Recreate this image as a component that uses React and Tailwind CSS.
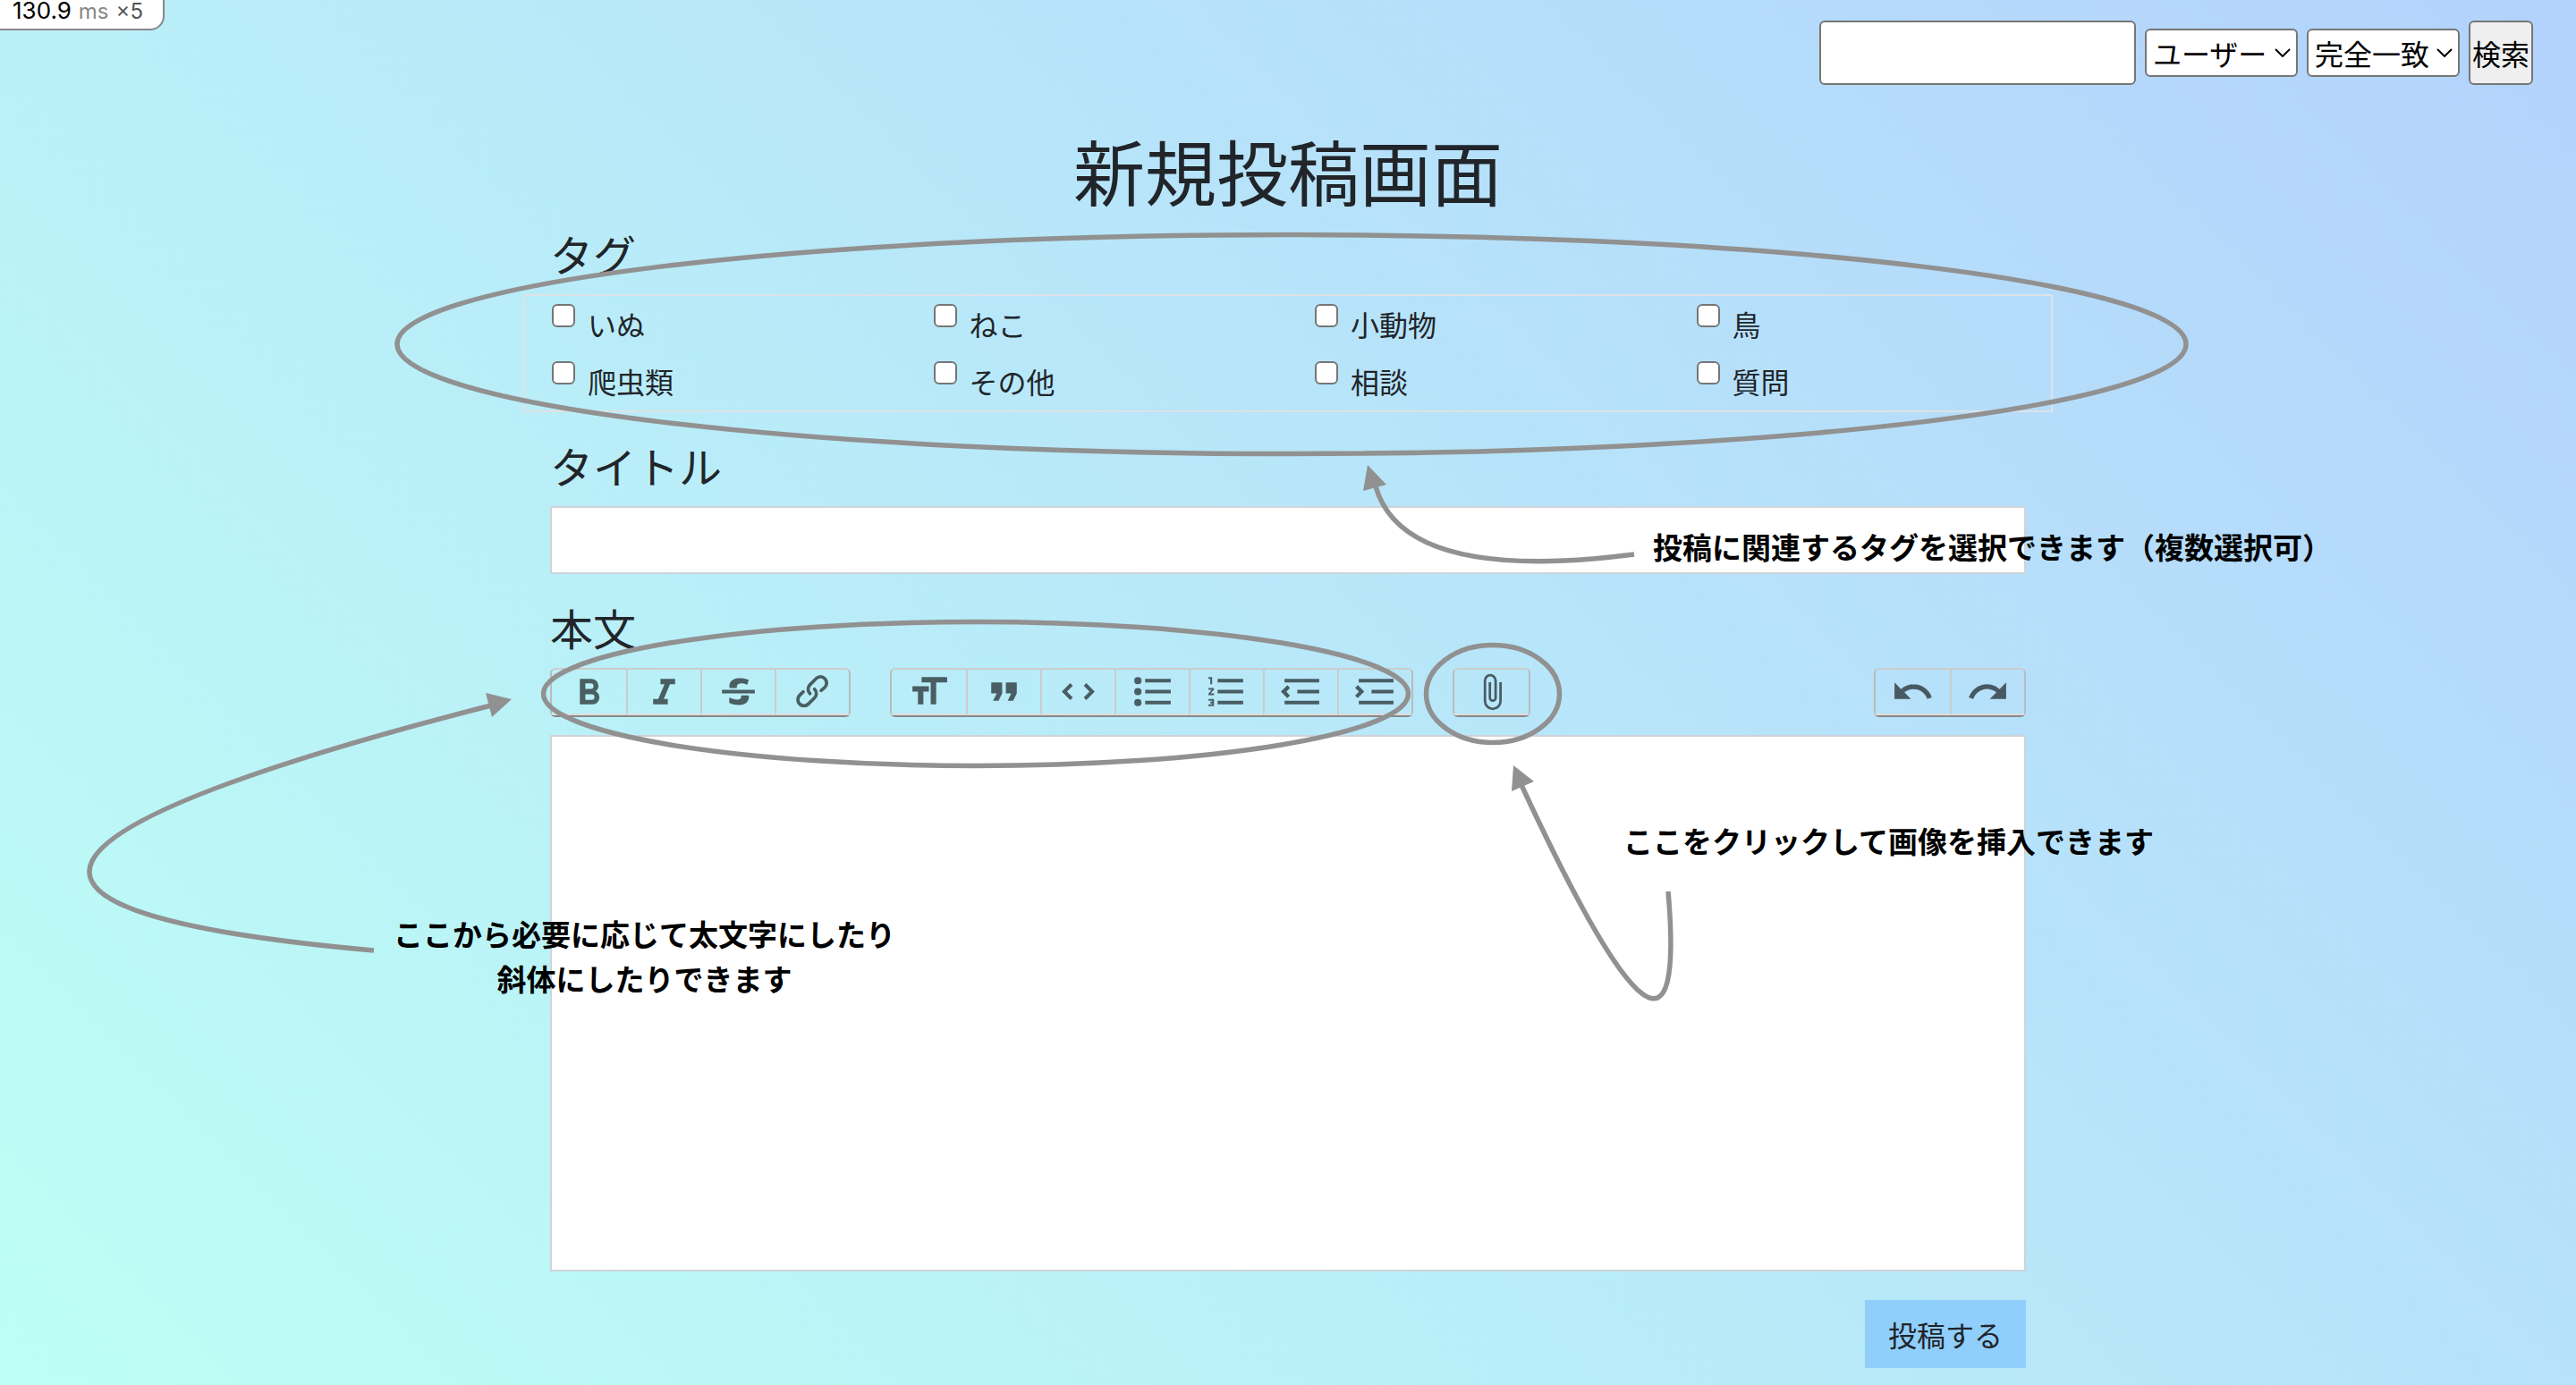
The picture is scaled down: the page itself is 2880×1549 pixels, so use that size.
import React from "react";

const PATHS = {
  bold: "M15.6 11.8c1-.7 1.6-1.8 1.6-2.8a4 4 0 0 0-4-4H7v14h7c2.1 0 3.7-1.7 3.7-3.8 0-1.5-.8-2.8-2.1-3.4zM10 7.5h3a1.5 1.5 0 1 1 0 3h-3v-3zm3.5 9H10v-3h3.5a1.5 1.5 0 1 1 0 3z",
  italic: "M10 5v3h2.2l-3.4 8H6v3h8v-3h-2.2l3.4-8H18V5h-8z",
  strike:
    "M3 11v2h18v-2H3zM7.2 10C6.5 6.7 9 4.7 12.6 4.7c1.9 0 3.6.3 5.1.9l-.9 2.7c-.9-.5-1.8-.8-3-.8-1.9 0-2.9.7-2.6 2.5H7.2zM17.7 14.1c.5 3-1.6 5.2-5.1 5.2-2 0-3.9-.3-5.6-1.2v-2.9c1.5.8 3 1.2 4.4 1.2 1.7 0 2.4-.9 2.1-2.3h4.2z",
  link: "M9.88 13.7a4.3 4.3 0 0 1 0-6.07l3.37-3.37a4.26 4.26 0 0 1 6.07 0 4.3 4.3 0 0 1 0 6.06l-1.96 1.72a.91.91 0 1 1-1.3-1.3l1.97-1.71a2.46 2.46 0 0 0-3.48-3.48l-3.38 3.37a2.46 2.46 0 0 0 0 3.48.91.91 0 1 1-1.3 1.3zM4.25 19.46a4.3 4.3 0 0 1 0-6.07l1.93-1.9a.91.91 0 1 1 1.3 1.3l-1.93 1.9a2.46 2.46 0 0 0 3.48 3.48l3.37-3.38c.96-.96.96-2.52 0-3.48a.91.91 0 1 1 1.3-1.3 4.3 4.3 0 0 1 0 6.07l-3.38 3.38a4.26 4.26 0 0 1-6.07 0z",
  heading: "M12 9v3H9v7H6v-7H3V9h9zM8 4h14v3h-6v12h-3V7H8V4z",
  quote: "M6 17h3l2-4V7H5v6h3zm8 0h3l2-4V7h-6v6h3z",
  code: "M18.2 12L15 15.2l1.4 1.4L21 12l-4.6-4.6L15 8.8l3.2 3.2zM5.8 12L9 8.8 7.6 7.4 3 12l4.6 4.6L9 15.2 5.8 12z",
  bullets:
    "M4 4a2 2 0 1 0 0 4 2 2 0 0 0 0-4zm0 6a2 2 0 1 0 0 4 2 2 0 0 0 0-4zm0 6a2 2 0 1 0 0 4 2 2 0 0 0 0-4zm4 3h14v-2H8v2zm0-6h14v-2H8v2zm0-8v2h14V5H8z",
  numbers:
    "M2 17h2v.5H3v1h1v.5H2v1h3v-4H2v1zm1-9h1V4H2v1h1v3zm-1 3h1.8L2 13.1v.9h3v-1H3.2L5 10.9V10H2v1zm5-6v2h14V5H7zm0 14h14v-2H7v2zm0-6h14v-2H7v2z",
  outdent:
    "M3 19h19v-2H3v2zm7-6h12v-2H10v2zm-8.3-.3l2.8 2.9L6 14.2 4 12l2-2-1.4-1.5L1 12l.7.7zM3 5v2h19V5H3z",
  indent:
    "M3 19h19v-2H3v2zm7-6h12v-2H10v2zm-6.9-1L1 14.2l1.4 1.4L6 12l-.7-.7-2.8-2.8L1 9.9 3.1 12zM3 5v2h19V5H3z",
  attach:
    "M16.5 6v11.5a4 4 0 1 1-8 0V5a2.5 2.5 0 0 1 5 0v10.5a1 1 0 1 1-2 0V6H10v9.5a2.5 2.5 0 0 0 5 0V5a4 4 0 1 0-8 0v12.5a5.5 5.5 0 0 0 11 0V6h-1.5z",
  undo: "M12.5 8c-2.6 0-5 1-6.9 2.6L2 7v9h9l-3.6-3.6A8 8 0 0 1 20 16l2.4-.8a10.5 10.5 0 0 0-10-7.2z",
  redo: "M18.4 10.6a10.5 10.5 0 0 0-16.9 4.6L4 16a8 8 0 0 1 12.7-3.6L13 16h9V7l-3.6 3.6z",
};

const TAGS = ["いぬ", "ねこ", "小動物", "鳥", "爬虫類", "その他", "相談", "質問"];

function ToolGroup({ tools }) {
  return (
    <div className="flex rounded-md border-2 border-[#bbb] border-t-[#ccc] border-b-[#888]">
      {tools.map(([id, label], i) => (
        <button
          key={id}
          type="button"
          aria-label={label}
          className={
            "flex h-[51px] w-[83px] items-center justify-center border-b-2 border-b-[#ddd] " +
            (i > 0 ? "border-l-2 border-l-[#ccc]" : "")
          }
        >
          <svg
            viewBox="0 0 24 24"
            className={id === "attach" ? "size-11 opacity-60" : "size-[49px] opacity-60"}
            aria-hidden="true"
          >
            <path d={PATHS[id]} />
          </svg>
        </button>
      ))}
    </div>
  );
}

function Select({ label, options }) {
  return (
    <div className="relative">
      <select
        aria-label={label}
        className="block h-[54px] w-[171px] appearance-none rounded-md border-2 border-[#767676] bg-white pl-[7px] text-[32px] leading-[50px] text-black"
      >
        {options.map((o) => (
          <option key={o}>{o}</option>
        ))}
      </select>
      <svg
        viewBox="0 0 18 10"
        className="pointer-events-none absolute top-[22px] right-2 h-[10px] w-[18px]"
        fill="none"
        stroke="#000"
        strokeWidth="2"
        aria-hidden="true"
      >
        <path d="M1 1l8 8 8-8" />
      </svg>
    </div>
  );
}

function Annotations() {
  return (
    <div className="pointer-events-none absolute inset-0 overflow-hidden text-[33px] leading-[50px] font-bold whitespace-nowrap text-black">
      <svg
        viewBox="0 0 2880 1549"
        className="absolute top-0 left-0 w-full"
        fill="none"
        stroke="#919191"
        strokeWidth="5.5"
        aria-hidden="true"
      >
        <ellipse cx="1444" cy="385" rx="1000" ry="122.5" />
        <ellipse cx="1091" cy="776" rx="483.5" ry="80.5" />
        <ellipse cx="1669" cy="776" rx="74.5" ry="54.5" />
        <path d="M1827 620Q1569 653 1538 544" />
        <path d="M418 1063Q-278 1001 549 789" />
        <path d="M1865 997Q1890 1286 1701 878" />
        <g fill="#919191" stroke="none">
          <path d="M1529 520L1524 549 1550 542z" />
          <path d="M572 782L543 775 550 802z" />
          <path d="M1692 856L1690 885 1715 874z" />
        </g>
      </svg>
      <p className="absolute top-[586px] left-[1848px]">
        投稿に関連するタグを選択できます（複数選択可）
      </p>
      <p className="absolute top-[915px] left-[1815px]">ここをクリックして画像を挿入できます</p>
      <p className="absolute top-[1019px] left-[440px] text-center">
        ここから必要に応じて太文字にしたり
        <br />
        斜体にしたりできます
      </p>
    </div>
  );
}

export default function App() {
  return (
    <div className="relative min-h-screen bg-linear-45 from-[#bdfff5] to-[#b3d2fc] pb-4 font-['Noto_Sans_CJK_JP',sans-serif] text-[#212529]">
      <div className="absolute top-0 left-0 flex h-[34px] w-[184px] items-baseline rounded-br-2xl border-r-2 border-b-2 border-[#888] bg-white pl-[14px] font-['Inter',sans-serif] text-[26px] leading-6 text-black">
        <span>130.9</span>
        <span className="ml-2 text-2xl leading-6 text-[#888]">ms</span>
        <span className="ml-2 text-2xl leading-6 text-[#555]">×5</span>
      </div>

      <form className="flex items-center justify-end gap-[10px] pt-[23px] pr-12">
        <input
          type="text"
          aria-label="検索ワード"
          className="h-[72px] w-[354px] rounded-md border-2 border-[#767676] bg-white px-2 text-[32px]"
        />
        <Select label="検索対象" options={["ユーザー", "投稿"]} />
        <Select label="検索方法" options={["完全一致", "部分一致"]} />
        <button
          type="button"
          className="h-[72px] w-[72px] rounded-md border-2 border-[#767676] bg-[#efefef] text-[32px] leading-[48px] whitespace-nowrap text-black"
        >
          検索
        </button>
      </form>

      <main className="mx-auto w-full max-w-[1650px] pt-[46px]">
        <h1 className="text-center text-[80px] leading-[96px]">新規投稿画面</h1>
        <form>
          <h2 className="mt-[18px] text-5xl leading-[56px]">タグ</h2>
          <div className="-mx-[30px] mt-[18px] grid grid-cols-4 border-2 border-[#dee2e6]">
            {TAGS.map((tag) => (
              <label key={tag} className="flex h-16 gap-[14px] pl-[30px] text-[32px] leading-[62px]">
                <input
                  type="checkbox"
                  className="mt-[9px] size-[26px] shrink-0 appearance-none rounded-md border-2 border-[#767676] bg-white"
                />
                {tag}
              </label>
            ))}
          </div>

          <label htmlFor="title" className="mt-[31px] block text-5xl leading-[56px]">
            タイトル
          </label>
          <input
            id="title"
            type="text"
            className="mt-[18px] block h-[76px] w-full border-2 border-[#ced4da] bg-white px-6 text-[32px]"
          />

          <label htmlFor="body" className="mt-[31px] block text-5xl leading-[56px]">
            本文
          </label>
          <div className="mt-[18px] flex gap-[44px]">
            <ToolGroup
              tools={[
                ["bold", "太字"],
                ["italic", "斜体"],
                ["strike", "取り消し線"],
                ["link", "リンク"],
              ]}
            />
            <ToolGroup
              tools={[
                ["heading", "見出し"],
                ["quote", "引用"],
                ["code", "コード"],
                ["bullets", "箇条書き"],
                ["numbers", "番号付きリスト"],
                ["outdent", "インデントを減らす"],
                ["indent", "インデントを増やす"],
              ]}
            />
            <ToolGroup tools={[["attach", "ファイルを添付"]]} />
            <div className="grow" />
            <ToolGroup
              tools={[
                ["undo", "元に戻す"],
                ["redo", "やり直す"],
              ]}
            />
          </div>
          <textarea
            id="body"
            className="mt-5 block h-[600px] w-full resize-none border-2 border-[#ced4da] bg-white p-6 text-[32px]"
          />
          <div className="mt-8 flex justify-end">
            <button type="button" className="h-[76px] w-[180px] bg-[#90cffc] text-[32px] leading-[48px]">
              投稿する
            </button>
          </div>
        </form>
      </main>

      <Annotations />
    </div>
  );
}
